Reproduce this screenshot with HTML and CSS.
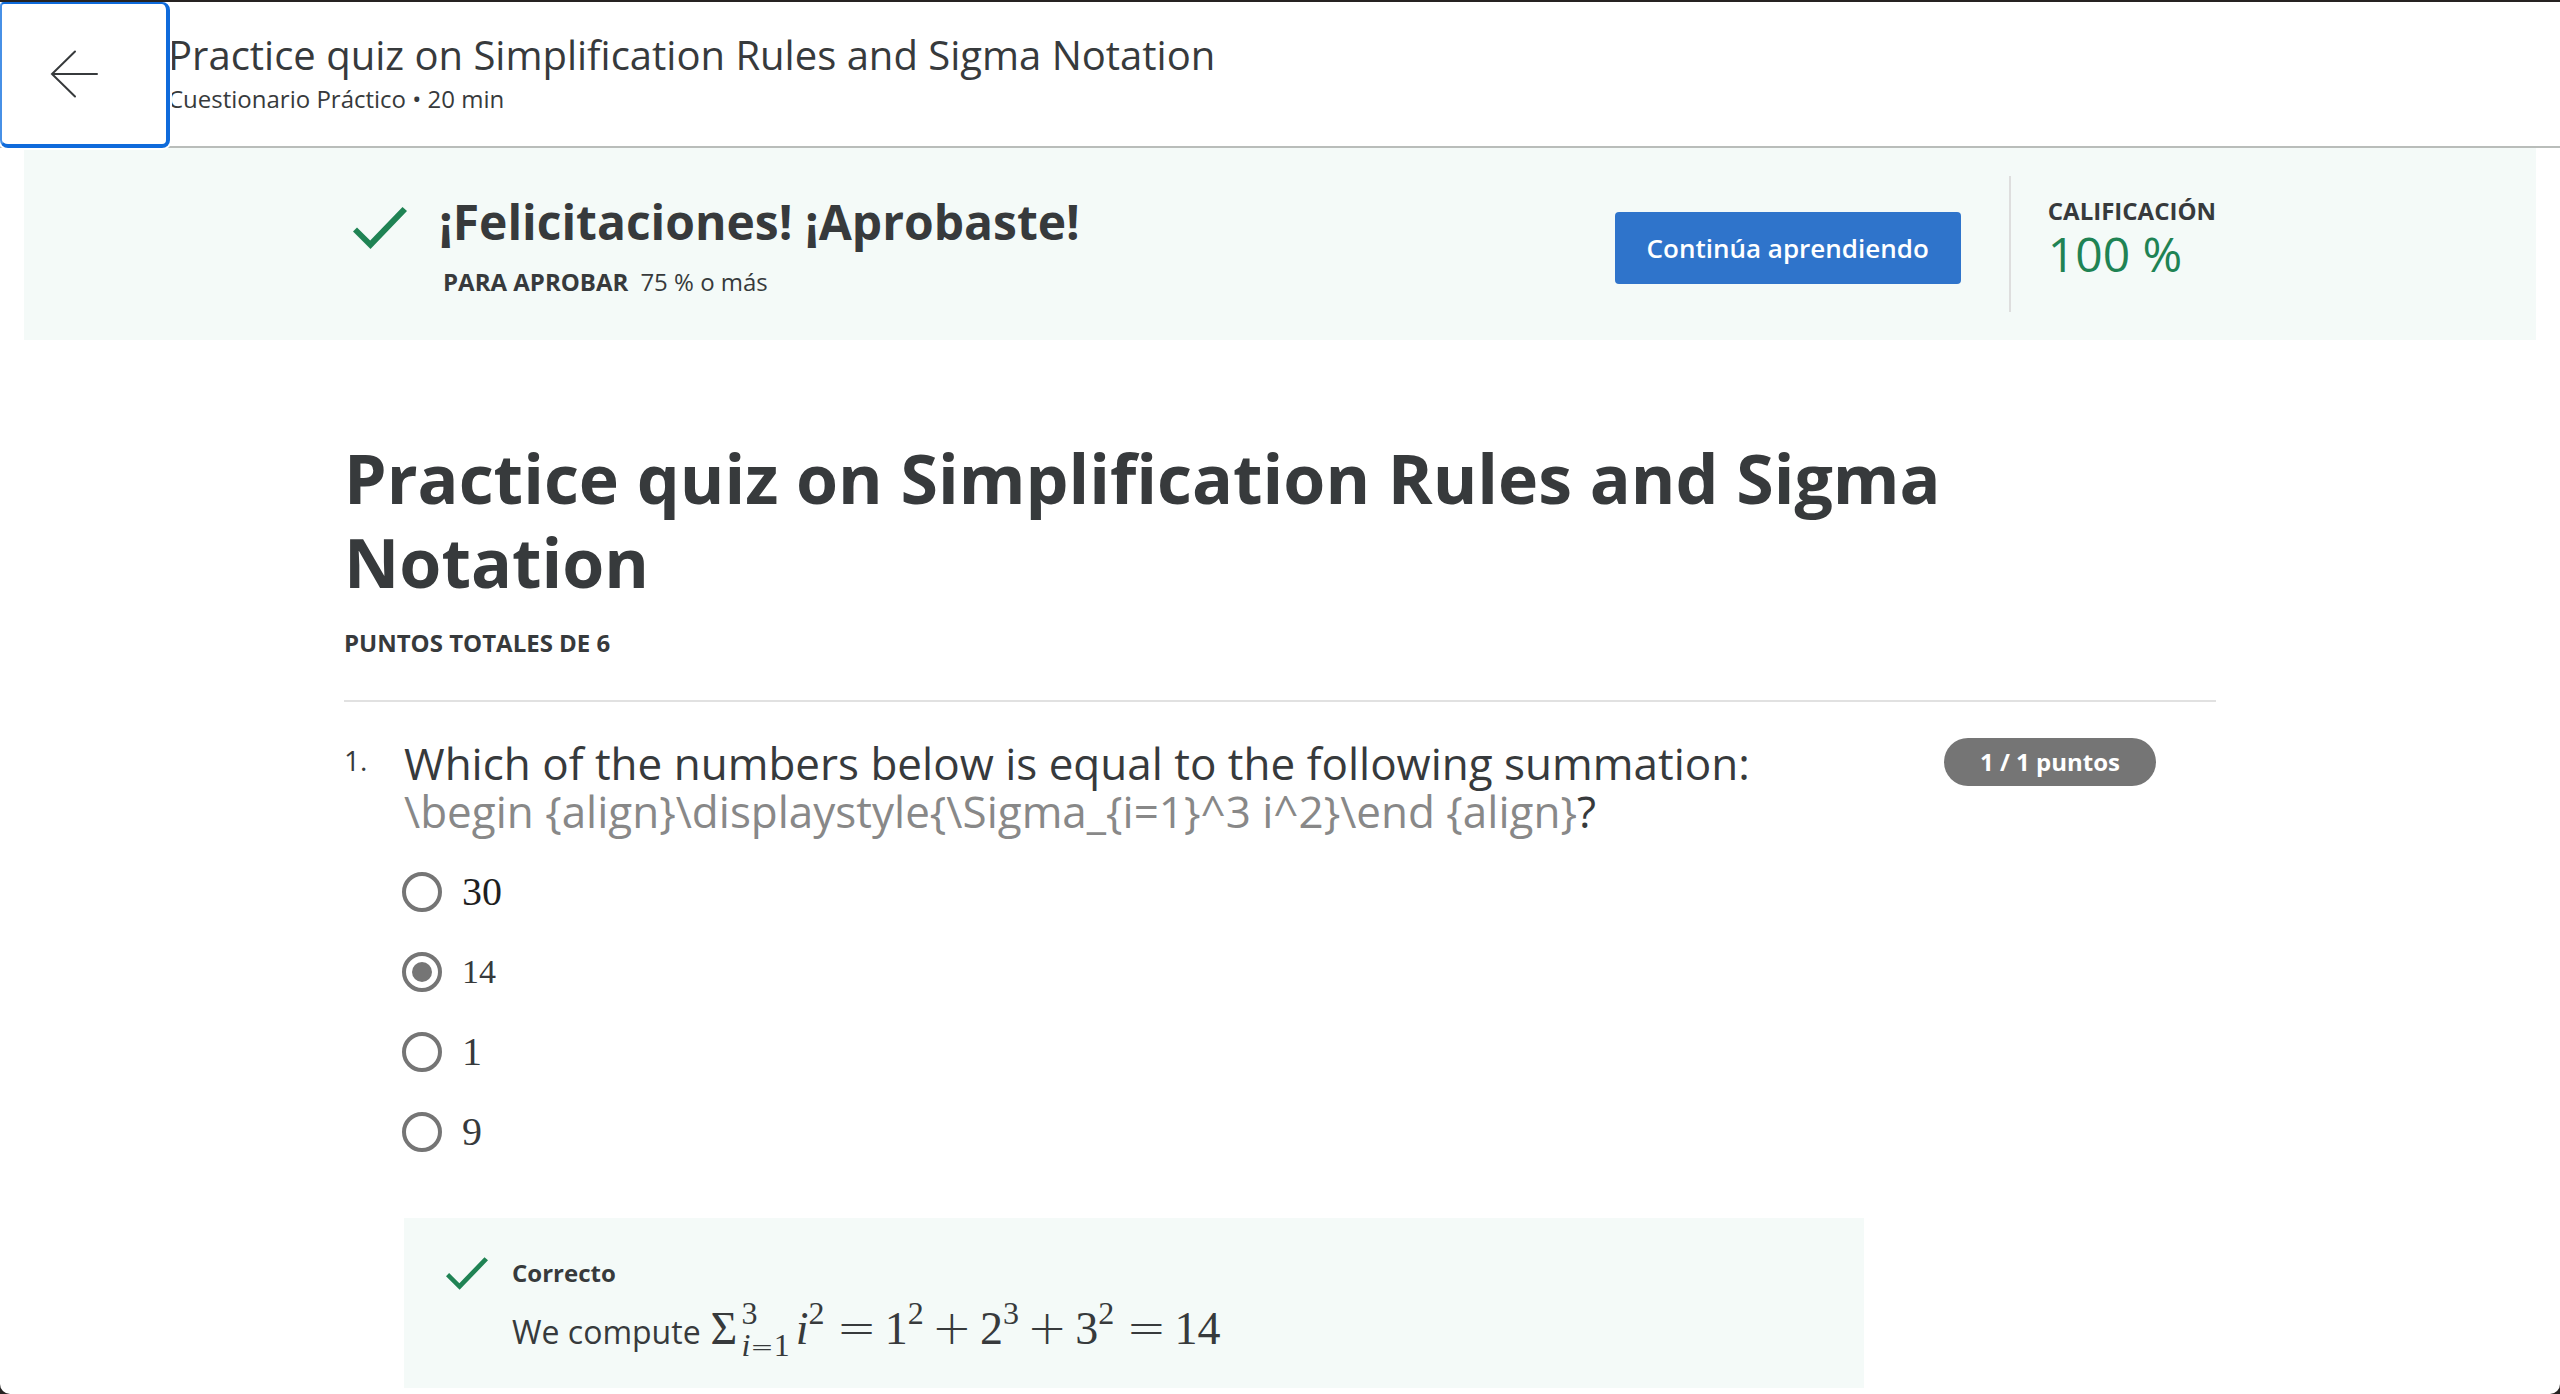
FILE: index.html
```html
<!DOCTYPE html>
<html lang="es">
<head>
<meta charset="utf-8">
<meta name="viewport" content="width=device-width, initial-scale=1">
<title>Practice quiz on Simplification Rules and Sigma Notation</title>
<link rel="stylesheet" href="styles.css">
</head>
<body>
<div class="window">
  <header class="topbar">
    <button class="back" type="button" aria-label="Volver">
      <svg width="48" height="48" viewBox="0 0 48 48" fill="none" stroke="currentColor" stroke-width="2" stroke-linecap="round" aria-hidden="true"><path d="M2 24H47M25 1.500L2 24L25 46.500"/></svg>
    </button>
    <div class="topbar-text">
      <p class="topbar-title">Practice quiz on Simplification Rules and Sigma Notation</p>
      <p class="topbar-meta">Cuestionario Práctico • 20 min</p>
    </div>
  </header>

  <section class="banner">
    <svg class="banner-check" viewBox="0 0 54 42" aria-hidden="true"><path d="M49.500 0L54 4L17.500 42L0 24.500L4 20.500L17.200 33.500Z"/></svg>
    <div class="banner-text">
      <h2 class="banner-title">¡Felicitaciones! ¡Aprobaste!</h2>
      <p class="banner-pass"><strong>PARA APROBAR</strong><span>75 % o más</span></p>
    </div>
    <button class="continue" type="button">Continúa aprendiendo</button>
    <div class="grade">
      <p class="label">CALIFICACIÓN</p>
      <p class="grade-value">100 %</p>
    </div>
  </section>

  <main class="quiz">
    <h1 class="quiz-title">Practice quiz on Simplification Rules and Sigma Notation</h1>
    <p class="label quiz-points">PUNTOS TOTALES DE 6</p>

    <section class="question">
      <span class="question-number">1.</span>
      <div class="question-body">
        <fieldset class="options">
          <legend class="prompt">Which of the numbers below is equal to the following summation: <span class="raw-math">\begin {align}\displaystyle{\Sigma_{i=1}^3 i^2}\end {align}</span>?</legend>
          <label class="option option-dark"><input type="radio" name="q1" value="30"><span>30</span></label>
          <label class="option option-small"><input type="radio" name="q1" value="14" checked><span>14</span></label>
          <label class="option"><input type="radio" name="q1" value="1"><span>1</span></label>
          <label class="option"><input type="radio" name="q1" value="9"><span>9</span></label>
        </fieldset>
        <div class="feedback">
          <svg class="feedback-check" viewBox="0 0 54 42" aria-hidden="true"><path d="M49.500 0L54 4L17.500 42L0 24.500L4 20.500L17.200 33.500Z"/></svg>
          <div>
            <p class="feedback-title">Correcto</p>
            <p class="feedback-text">We compute <span class="math"><span>Σ</span><span class="limits"><span>3</span><span><i>i</i><b class="op">=</b>1</span></span><i>i</i><sup>2</sup><b class="op equals">=</b>1<sup>2</sup><b class="op">+</b>2<sup>3</sup><b class="op">+</b>3<sup>2</sup><b class="op equals">=</b>14</span></p>
          </div>
        </div>
      </div>
      <span class="pill">1 / 1 puntos</span>
    </section>
  </main>
</div>
</body>
</html>
```
FILE: styles.css
```css
* {
  box-sizing: border-box;
}

html {
  background: #262322;
}

body {
  margin: 0;
  padding-top: 2px;
  color: #373a3c;
  font-family: "Open Sans", "Noto Sans", sans-serif;
  font-size: 24px;
  line-height: 36px;
}

p, h1, h2 {
  margin: 0;
}

button {
  font: inherit;
  cursor: pointer;
}

.window {
  min-height: calc(100vh - 2px);
  padding-bottom: 6px;
  background: #fff;
  border-radius: 0 0 10px 10px;
  overflow: hidden;
}

.topbar {
  display: flex;
  height: 146px;
  border-bottom: 2px solid #b9bdba;
}

.back {
  position: relative;
  z-index: 1;
  display: flex;
  align-items: center;
  flex: none;
  width: 170px;
  height: 146px;
  margin-right: -2px;
  padding: 0 0 0 48px;
  color: #373a3c;
  background: #fff;
  border: solid #0f6bdb;
  border-width: 2px 4px 4px 2px;
  border-left-color: #4790e6;
  border-radius: 4px 8px 8px 8px;
  box-shadow: 0 0 0 2px #fff;
}

.topbar-text {
  align-self: center;
  padding-top: 2px;
}

.topbar-title {
  font-size: 40px;
  line-height: 48px;
}

.topbar-meta {
  line-height: 40px;
}

.banner {
  display: flex;
  align-items: center;
  margin: 0 24px;
  padding: 28px 320px 28px 329px;
  background: #f4faf8;
}

.banner-check,
.feedback-check {
  flex: none;
  fill: #1f8354;
}

.banner-check {
  width: 54px;
  height: 42px;
  margin: 0 32px 32px 0;
}

.banner-text {
  display: grid;
  gap: 12px;
  flex: 1;
  padding-top: 4px;
}

.banner-title {
  font-size: 48px;
  line-height: 60px;
}

.banner-pass {
  display: flex;
  gap: 12px;
  padding-left: 4px;
}

.continue {
  height: 72px;
  margin: 8px 48px 0 0;
  padding: 0 32px;
  color: #fff;
  background: #2f74cb;
  border: 0;
  border-radius: 4px;
  font-size: 26px;
  font-weight: 600;
}

.grade {
  height: 136px;
  padding: 17px 0 0 37px;
  border-left: 2px solid #dedede;
}

.label {
  font-weight: 700;
}

.grade-value {
  padding-top: 1px;
  color: #1f8354;
  font-size: 48px;
  line-height: 48px;
}

.quiz {
  margin: 96px 344px 0;
}

.quiz-title {
  font-size: 68px;
  line-height: 84px;
}

.quiz-points {
  padding: 21px 0 39px;
  border-bottom: 2px solid #e1e1e1;
}

.question {
  display: flex;
  align-items: flex-start;
  padding-top: 36px;
}

.question-number {
  flex: none;
  width: 60px;
  font-size: 28px;
  line-height: 44px;
}

.question-body {
  flex: 1;
  max-width: 1460px;
}

.options {
  margin: 0;
  padding: 0;
  border: 0;
}

.prompt {
  padding: 1px 0 17px;
  font-size: 44px;
  line-height: 48px;
}

.raw-math {
  color: #888;
}

.option {
  display: flex;
  align-items: center;
  gap: 20px;
  height: 80px;
  margin-left: -2px;
  font-family: "Liberation Serif", serif;
  font-size: 40px;
}

.option-dark {
  color: #1f1f1f;
}

.option-small {
  font-size: 34px;
}

.option input {
  appearance: none;
  width: 40px;
  height: 40px;
  margin: 0;
  border: 4px solid #757575;
  border-radius: 50%;
}

.option input:checked {
  padding: 6px;
  background: #757575 content-box;
}

.feedback {
  display: flex;
  gap: 24px;
  margin-top: 46px;
  padding: 37px 42px 18px;
  background: #f4faf8;
}

.feedback-check {
  width: 42px;
  height: 33px;
  margin-top: 2px;
}

.feedback-title {
  font-weight: 700;
}

.feedback-text {
  display: flex;
  align-items: baseline;
  gap: 10px;
  font-size: 32px;
  line-height: 76px;
}

.math {
  display: flex;
  align-items: baseline;
  font-family: "Liberation Serif", serif;
  font-size: 46px;
}

.math sup {
  position: relative;
  top: -20px;
  font-size: 32px;
  line-height: 32px;
  vertical-align: baseline;
}

.limits {
  position: relative;
  top: -20px;
  display: inline-grid;
  margin: 0 6px -20px 4px;
  font-size: 32px;
  line-height: 32px;
}

.op {
  margin: 0 8px;
  font-family: "DejaVu Sans", sans-serif;
  font-size: 48px;
  font-weight: 200;
  line-height: 48px;
}

.equals {
  margin: 0 8px 0 12px;
}

.limits .op {
  margin: 0;
  font-size: 28px;
  line-height: 28px;
}

.pill {
  flex: none;
  margin: 0 60px 0 auto;
  padding: 6px 36px;
  color: #fff;
  background: #757575;
  border-radius: 24px;
  font-size: 24px;
  font-weight: 700;
}
```
